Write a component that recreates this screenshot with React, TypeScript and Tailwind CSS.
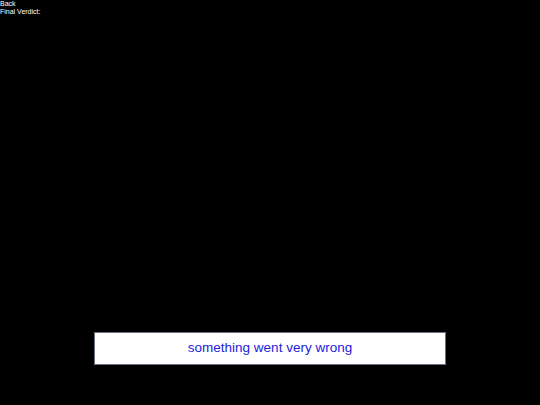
export default function App() {
  return (
    <div className="flex h-[405px] w-full flex-col bg-black font-['Liberation_Sans',Arial,sans-serif]">
      <div className="text-[7px] leading-[8px] text-white">
        <div>Back</div>
        <div>Final Verdict:</div>
      </div>
      <div className="mt-auto mb-[40px] flex justify-center">
        <div className="flex h-[33px] w-[352px] items-center justify-center border border-gray-500 bg-white text-[13.5px] text-[#2222dd]">
          something went very wrong
        </div>
      </div>
    </div>
  );
}
